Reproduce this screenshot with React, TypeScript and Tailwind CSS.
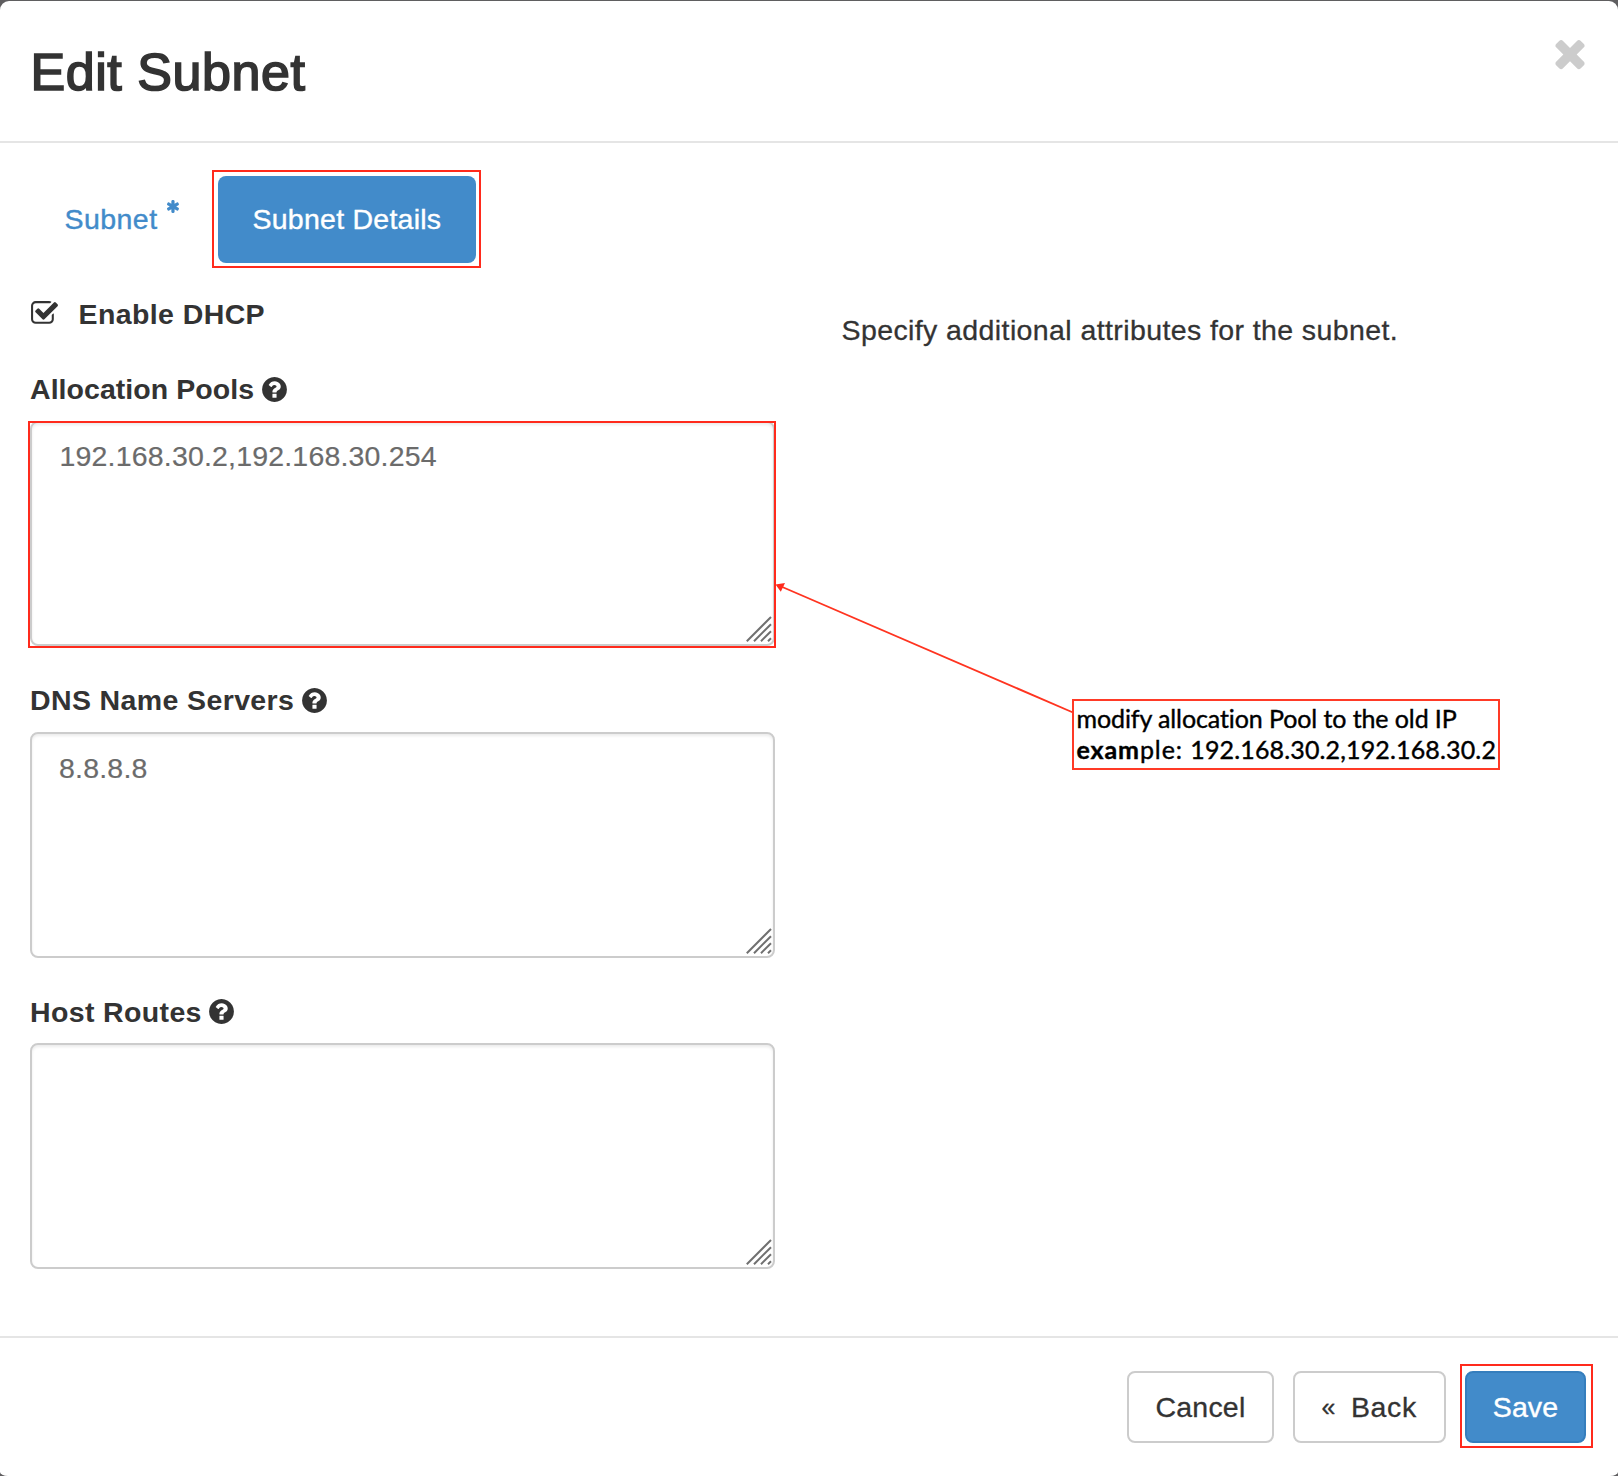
import React from "react";

const ICONS = {
  times:
    "M1490 1322q0 40-28 68l-136 136q-28 28-68 28t-68-28l-294-294-294 294q-28 28-68 28t-68-28l-136-136q-28-28-28-68t28-68l294-294-294-294q-28-28-28-68t28-68l136-136q28-28 68-28t68 28l294 294 294-294q28-28 68-28t68 28l136 136q28 28 28 68t-28 68l-294 294 294 294q28 28 28 68z",
  asterisk:
    "M1482 1050q46 26 59.5 77.5t-12.5 97.5l-64 110q-26 46-77.5 59.5t-97.5-12.5l-266-153v307q0 52-38 90t-90 38h-128q-52 0-90-38t-38-90v-307l-266 153q-46 26-97.5 12.5t-77.5-59.5l-64-110q-26-46-12.5-97.5t59.5-77.5l266-154-266-154q-46-26-59.5-77.5t12.5-97.5l64-110q26-46 77.5-59.5t97.5 12.5l266 153v-307q0-52 38-90t90-38h128q52 0 90 38t38 90v307l266-153q46-26 97.5-12.5t77.5 59.5l64 110q26 46 12.5 97.5t-59.5 77.5l-266 154z",
  check:
    "M1472 930v318q0 119-84.5 203.5t-203.5 84.5h-832q-119 0-203.5-84.5t-84.5-203.5v-832q0-119 84.5-203.5t203.5-84.5h832q63 0 117 25 15 7 18 23 3 17-9 29l-49 49q-10 10-23 10-3 0-9-2-23-6-45-6h-832q-66 0-113 47t-47 113v832q0 66 47 113t113 47h832q66 0 113-47t47-113v-254q0-13 9-22l64-64q10-10 23-10 6 0 12 3 20 8 20 29zm231-489l-814 814q-24 24-57 24t-57-24l-430-430q-24-24-24-57t24-57l110-110q24-24 57-24t57 24l263 263 647-647q24-24 57-24t57 24l110 110q24 24 24 57t-24 57z",
  question:
    "M1024 1376v-192q0-14-9-23t-23-9h-192q-14 0-23 9t-9 23v192q0 14 9 23t23 9h192q14 0 23-9t9-23zm256-672q0-88-55.5-163t-138.5-116-170-41q-243 0-371 213-15 24 8 42l132 100q7 6 19 6 16 0 25-12 53-68 86-92 34-24 86-24 48 0 85.5 26t37.5 59q0 38-20 61t-68 45q-63 28-115.5 86.5t-52.5 125.5v36q0 14 9 23t23 9h192q14 0 23-9t9-23q0-19 21.5-49.5t54.5-49.5q32-18 49-28.5t46-35 44.5-48 28-60.5 12.5-81zm384 192q0 209-103 385.5t-279.5 279.5-385.5 103-385.5-103-279.5-279.5-103-385.5 103-385.5 279.5-279.5 385.5-103 385.5 103 279.5 279.5 103 385.5z",
};

function Icon({ name, className }: { name: keyof typeof ICONS; className: string }) {
  return (
    <svg viewBox="0 0 1792 1792" fill="currentColor" className={className} aria-hidden="true">
      <path d={ICONS[name]} />
    </svg>
  );
}

function Field({
  label,
  value,
  className,
  labelClass,
  boxClass,
  areaClass,
  marked,
}: {
  label: string;
  value: string;
  className: string;
  labelClass: string;
  boxClass: string;
  areaClass: string;
  marked?: boolean;
}) {
  return (
    <div className={className}>
      <label className={`flex h-10 items-start whitespace-nowrap font-bold ${labelClass}`}>
        <span>{label}</span>
        <Icon name="question" className="mt-[4.5px] ml-[5.5px] size-[29px]" />
      </label>
      <div className={`relative mt-[11px] ${boxClass}`}>
        <textarea
          defaultValue={value}
          spellCheck={false}
          className={`block h-full w-full resize-none overflow-hidden rounded-lg border-2 border-[#ccc] bg-white leading-10 text-[#6b6b6b] shadow-[inset_0_2px_3px_rgba(0,0,0,0.08)] outline-none [-webkit-text-stroke:0.2px_#6b6b6b] ${areaClass}`}
        />
        <svg
          viewBox="0 0 26 26"
          className="absolute right-[3px] bottom-[4px] size-[26px]"
          stroke="#707070"
          strokeWidth="2"
        >
          <path d="M.8 25.2 25 1M8 25.2 25 8.2M15 25.2l10-10M22 25.2l3-3" fill="none" />
        </svg>
        {marked && (
          <div className="pointer-events-none absolute top-0 -right-px -bottom-[2px] -left-[2px] border-2 border-[#ff2a1c]" />
        )}
      </div>
    </div>
  );
}

export default function App() {
  return (
    <div className="relative h-[1476px] w-[1618px] overflow-hidden bg-[#5f5e60] pt-px font-['Liberation_Sans',Arial,sans-serif] text-[28.5px] text-[#333]">
      <div className="flex h-[1475px] flex-col overflow-hidden bg-white [border-radius:9px_9px_8px_8px/9px_9px_4px_4px]">
        <header className="flex h-[142px] shrink-0 justify-between border-b-2 border-[#e5e5e5] pr-[26.5px] pl-[30.5px]">
          <h4 className="mt-[43px] text-[52px] leading-[57px] tracking-[0.55px] [-webkit-text-stroke:1.7px_#333]">
            Edit Subnet
          </h4>
          <button aria-label="Close" className="mt-[29.5px] h-[44px] text-[#ccc]">
            <Icon name="times" className="size-[44px]" />
          </button>
        </header>

        <main className="h-[1193px] shrink-0 pt-[33px] pl-[30px]">
          <nav className="flex gap-1">
            <a className="flex h-[87px] w-[184px] items-center pb-[2px] pl-[34.5px] leading-10 tracking-[0.45px] text-[#428bca] [-webkit-text-stroke:0.4px_#428bca]">
              Subnet
              <Icon name="asterisk" className="mb-[25px] ml-[8px] size-[15px]" />
            </a>
            <div className="relative">
              <a className="flex h-[87px] w-[258px] items-center rounded-lg bg-[#428bca] pb-[2px] pl-[34.5px] leading-10 tracking-[0.25px] whitespace-nowrap text-white [-webkit-text-stroke:0.4px_#fff]">
                Subnet Details
              </a>
              <div className="absolute -top-[6px] -right-[5px] -bottom-[5px] -left-[6px] border-2 border-[#ff2a1c]" />
            </div>
          </nav>

          <div className="mt-8 grid grid-cols-[745px_1fr] gap-x-[66px]">
            <form>
              <label className="flex h-10 items-start leading-[38px] font-bold tracking-[0.4px]">
                <Icon name="check" className="mt-[4px] mr-[20px] -ml-[0.5px] size-[29px]" />
                Enable DHCP
              </label>
              <Field
                label="Allocation Pools"
                value="192.168.30.2,192.168.30.254"
                className="mt-[35px]"
                labelClass="leading-[38px] tracking-[0.05px]"
                boxClass="h-[225px]"
                areaClass="px-[27.5px] pt-[13px] tracking-[0.18px]"
                marked
              />
              <Field
                label="DNS Name Servers"
                value="8.8.8.8"
                className="mt-[35px]"
                labelClass="leading-[38px] tracking-[0.38px]"
                boxClass="h-[226px]"
                areaClass="px-[27px] pt-[14px] tracking-[0.2px]"
              />
              <Field
                label="Host Routes"
                value=""
                className="mt-[34px]"
                labelClass="leading-10 tracking-[0.36px]"
                boxClass="h-[226px]"
                areaClass="px-[27px] pt-[14px]"
              />
            </form>
            <p className="mt-[15px] pl-[0.5px] leading-10 tracking-[0.4px] [-webkit-text-stroke:0.3px_#333]">
              Specify additional attributes for the subnet.
            </p>
          </div>
        </main>

        <footer className="flex grow items-start justify-end gap-[19px] border-t-2 border-[#e5e5e5] pt-[33px] pr-8">
          <button className="h-[72px] w-[147px] rounded-lg border-2 border-[#ccc] leading-10 tracking-[0.2px] [-webkit-text-stroke:0.3px_#333]">
            Cancel
          </button>
          <button className="flex h-[72px] w-[153px] items-center rounded-lg border-2 border-[#ccc] pl-[26.5px] leading-10 tracking-[0.6px] [-webkit-text-stroke:0.3px_#333]">
            <span className="w-[29.5px] text-left text-[25px]">«</span>
            <span>Back</span>
          </button>
          <div className="relative">
            <button className="h-[72px] w-[121px] rounded-lg border-2 border-[#357ebd] bg-[#428bca] leading-10 tracking-[0.1px] text-white [-webkit-text-stroke:0.4px_#fff]">
              Save
            </button>
            <div className="pointer-events-none absolute -top-[7px] -right-[7px] -bottom-[5px] -left-[5px] border-2 border-[#ff2a1c]" />
          </div>
        </footer>
      </div>

      {/* Annotation arrow and note laid over the dialog */}
      <svg className="absolute top-[574px] left-[770px] h-[150px] w-[310px]" viewBox="770 575 310 150">
        <path d="M780 587 1073 713.5" stroke="#ff3420" strokeWidth="1.9" />
        <path d="M775.5 585.4 785 583.9 780.8 592.7z" fill="#ff2a1c" />
      </svg>
      <div className="absolute top-[699px] left-[1072px] h-[71px] w-[428px] border-2 border-[#ff3a26] bg-white pt-[1.5px] pl-[2.5px] font-[Lato,sans-serif] text-[25px] leading-[31.5px] whitespace-nowrap text-black [-webkit-text-stroke:0.4px_#000]">
        <div className="tracking-[-0.1px] [font-variant-ligatures:none]">modify allocation Pool to the old IP</div>
        <div className="tracking-[0.15px]">
          <span className="tracking-[0.9px]">
            <span className="font-bold">exam</span>ple:{" "}
          </span>
          192.168.30.2,192.168.30.2
        </div>
      </div>
    </div>
  );
}
